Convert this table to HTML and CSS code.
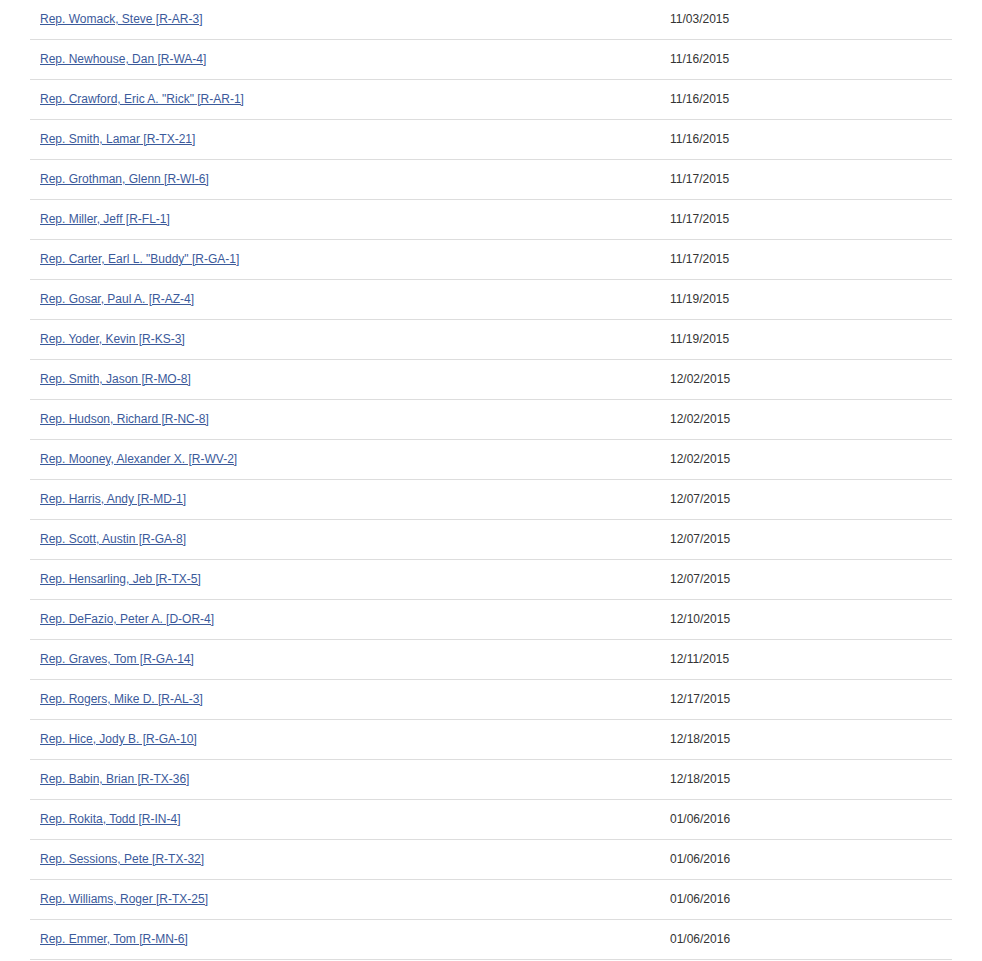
FILE: index.html
```html
<!DOCTYPE html>
<html>
<head>
<meta charset="utf-8">
<link rel="stylesheet" href="styles.css">
</head>
<body>
<table class="cosponsors">
<tbody>
<tr><td class="name"><a href="#">Rep. Womack, Steve [R-AR-3]</a></td><td class="date">11/03/2015</td></tr>
<tr><td class="name"><a href="#">Rep. Newhouse, Dan [R-WA-4]</a></td><td class="date">11/16/2015</td></tr>
<tr><td class="name"><a href="#">Rep. Crawford, Eric A. "Rick" [R-AR-1]</a></td><td class="date">11/16/2015</td></tr>
<tr><td class="name"><a href="#">Rep. Smith, Lamar [R-TX-21]</a></td><td class="date">11/16/2015</td></tr>
<tr><td class="name"><a href="#">Rep. Grothman, Glenn [R-WI-6]</a></td><td class="date">11/17/2015</td></tr>
<tr><td class="name"><a href="#">Rep. Miller, Jeff [R-FL-1]</a></td><td class="date">11/17/2015</td></tr>
<tr><td class="name"><a href="#">Rep. Carter, Earl L. "Buddy" [R-GA-1]</a></td><td class="date">11/17/2015</td></tr>
<tr><td class="name"><a href="#">Rep. Gosar, Paul A. [R-AZ-4]</a></td><td class="date">11/19/2015</td></tr>
<tr><td class="name"><a href="#">Rep. Yoder, Kevin [R-KS-3]</a></td><td class="date">11/19/2015</td></tr>
<tr><td class="name"><a href="#">Rep. Smith, Jason [R-MO-8]</a></td><td class="date">12/02/2015</td></tr>
<tr><td class="name"><a href="#">Rep. Hudson, Richard [R-NC-8]</a></td><td class="date">12/02/2015</td></tr>
<tr><td class="name"><a href="#">Rep. Mooney, Alexander X. [R-WV-2]</a></td><td class="date">12/02/2015</td></tr>
<tr><td class="name"><a href="#">Rep. Harris, Andy [R-MD-1]</a></td><td class="date">12/07/2015</td></tr>
<tr><td class="name"><a href="#">Rep. Scott, Austin [R-GA-8]</a></td><td class="date">12/07/2015</td></tr>
<tr><td class="name"><a href="#">Rep. Hensarling, Jeb [R-TX-5]</a></td><td class="date">12/07/2015</td></tr>
<tr><td class="name"><a href="#">Rep. DeFazio, Peter A. [D-OR-4]</a></td><td class="date">12/10/2015</td></tr>
<tr><td class="name"><a href="#">Rep. Graves, Tom [R-GA-14]</a></td><td class="date">12/11/2015</td></tr>
<tr><td class="name"><a href="#">Rep. Rogers, Mike D. [R-AL-3]</a></td><td class="date">12/17/2015</td></tr>
<tr><td class="name"><a href="#">Rep. Hice, Jody B. [R-GA-10]</a></td><td class="date">12/18/2015</td></tr>
<tr><td class="name"><a href="#">Rep. Babin, Brian [R-TX-36]</a></td><td class="date">12/18/2015</td></tr>
<tr><td class="name"><a href="#">Rep. Rokita, Todd [R-IN-4]</a></td><td class="date">01/06/2016</td></tr>
<tr><td class="name"><a href="#">Rep. Sessions, Pete [R-TX-32]</a></td><td class="date">01/06/2016</td></tr>
<tr><td class="name"><a href="#">Rep. Williams, Roger [R-TX-25]</a></td><td class="date">01/06/2016</td></tr>
<tr><td class="name"><a href="#">Rep. Emmer, Tom [R-MN-6]</a></td><td class="date">01/06/2016</td></tr>
</tbody>
</table>
</body>
</html>
```
FILE: styles.css
```css
html, body {
  margin: 0;
  padding: 0;
  background: #fff;
}
body {
  font-family: "Liberation Sans", Arial, sans-serif;
  font-size: 12px;
  color: #333;
}
.cosponsors {
  margin-left: 30px;
  width: 922px;
  border-collapse: collapse;
}
.cosponsors td {
  padding: 11px 10px 11px 10px;
  line-height: 17px;
  vertical-align: middle;
  border-bottom: 1px solid #ddd;
}
.cosponsors .name {
  width: 610px;
}
.cosponsors .name a {
  color: #3b5a9b;
  text-decoration: underline;
}
.cosponsors .date {
  color: #333;
}
```
